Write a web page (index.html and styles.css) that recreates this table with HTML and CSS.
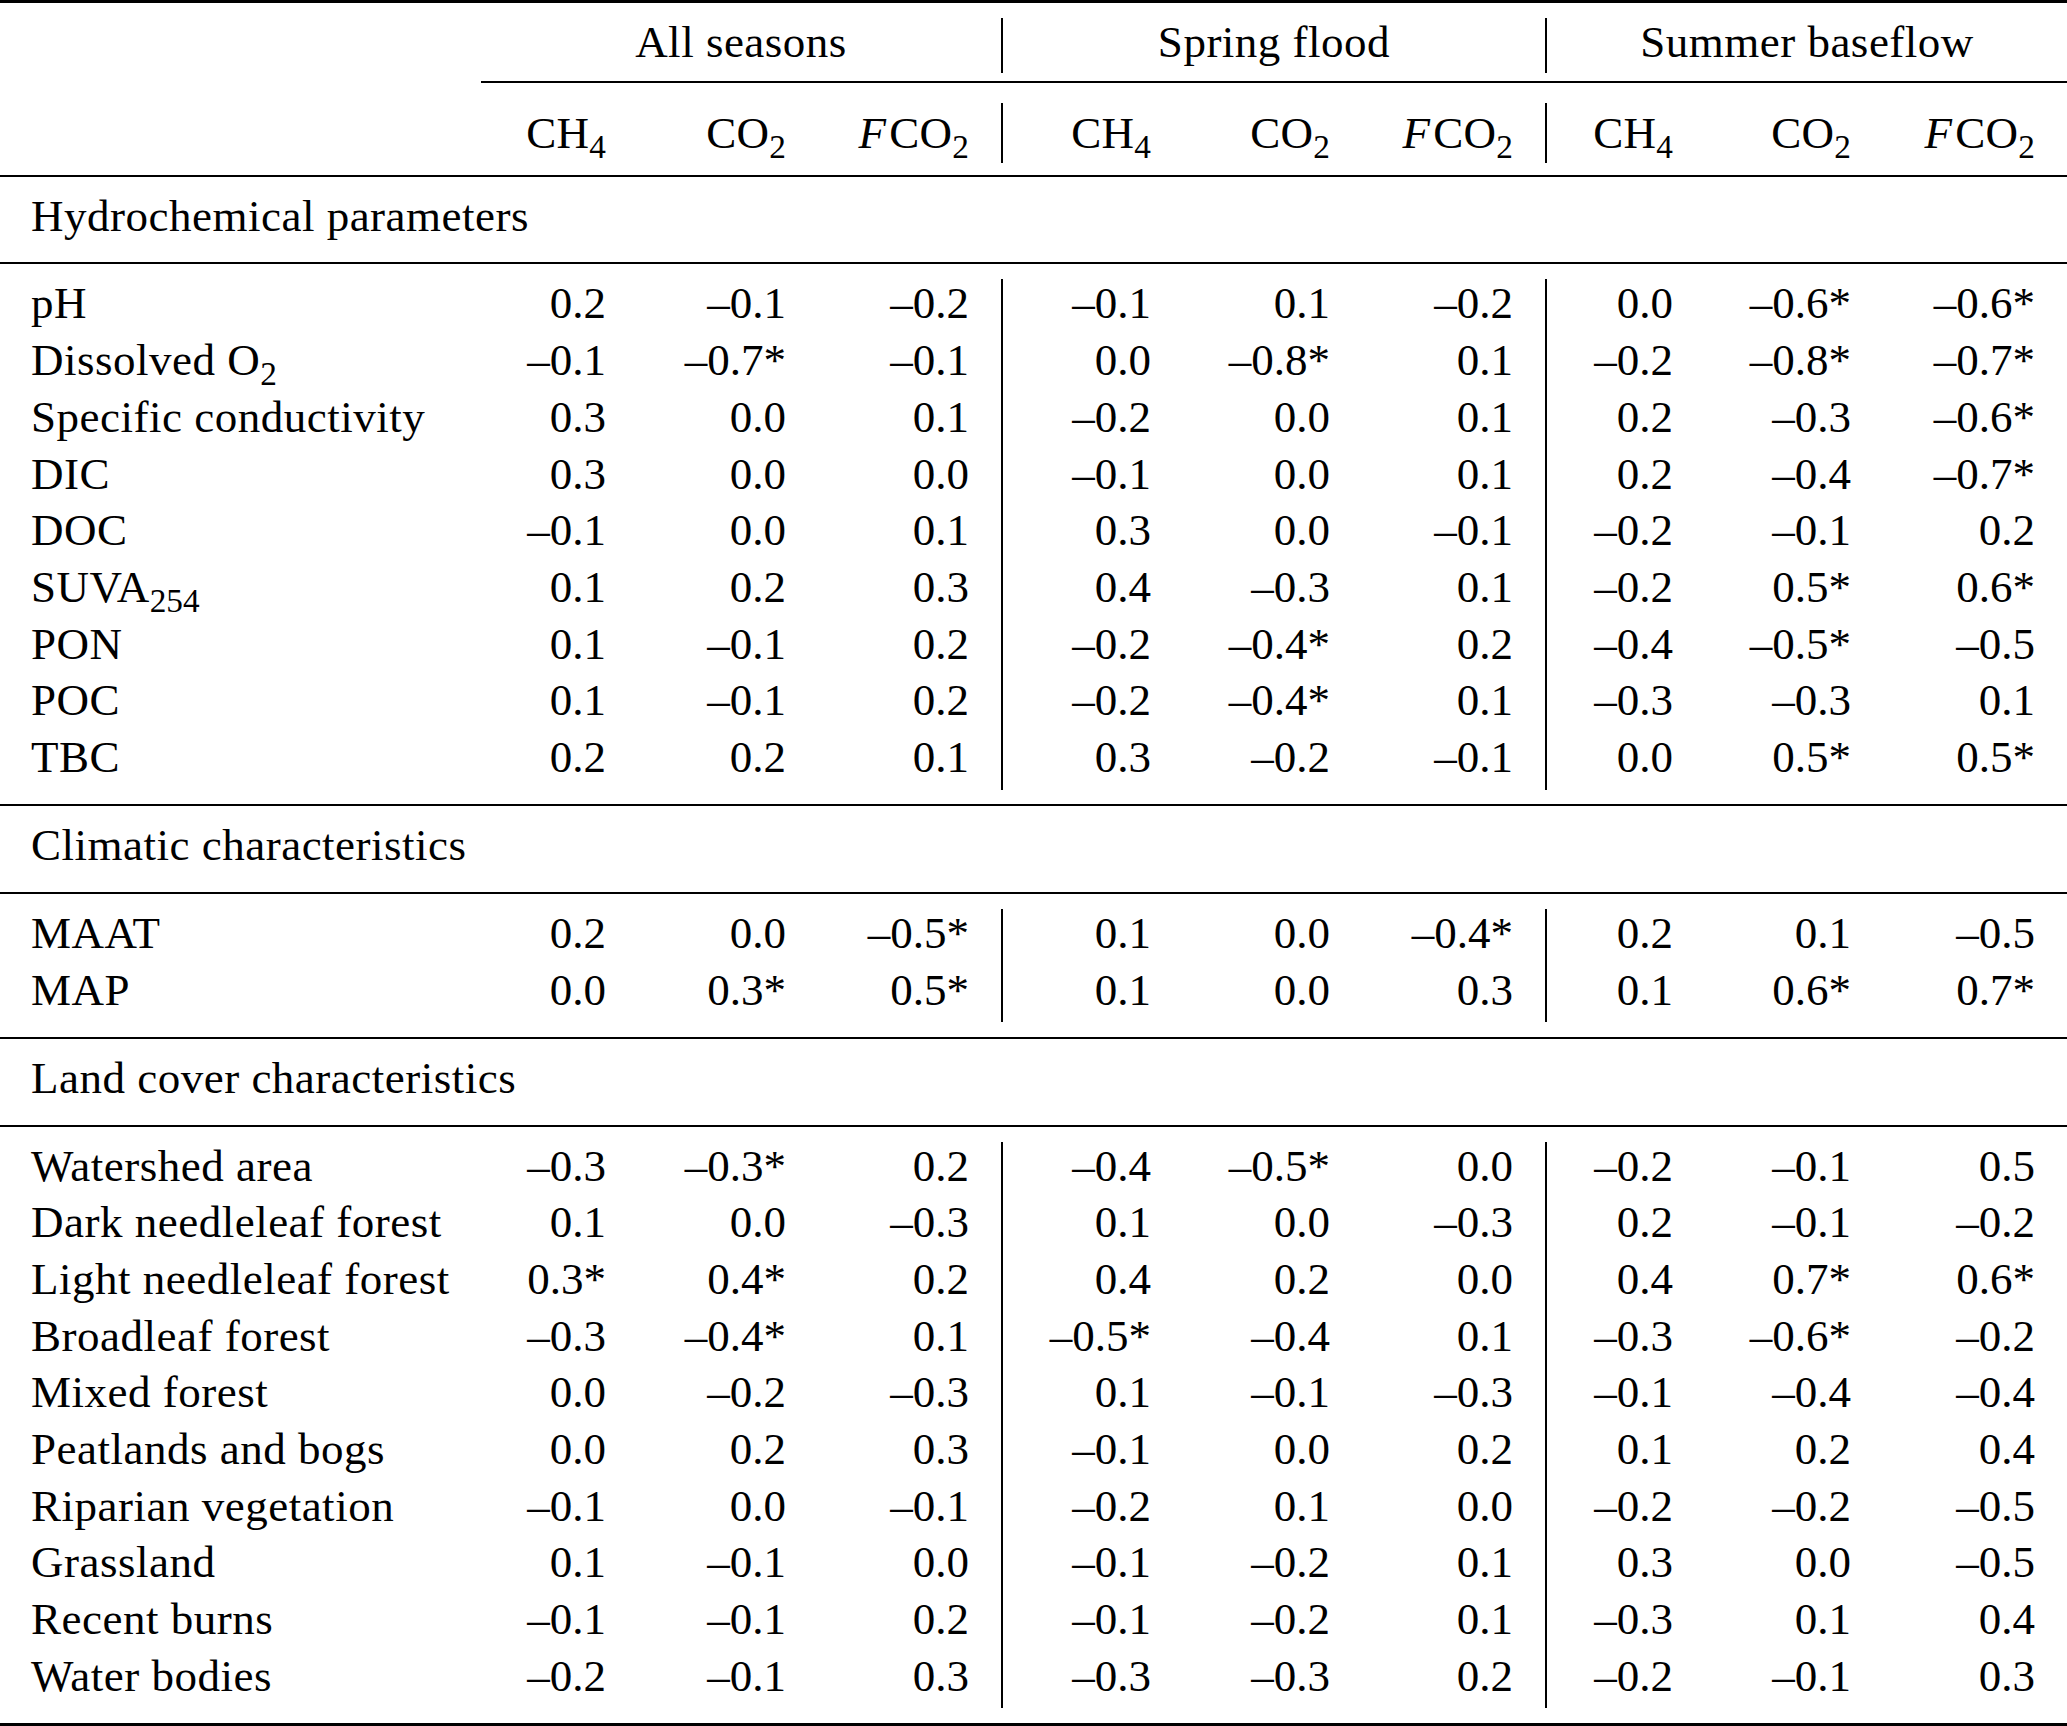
FILE: index.html
```html
<!DOCTYPE html>
<html lang="en">
<head>
<meta charset="utf-8">
<title>Correlation table</title>
<link rel="stylesheet" href="styles.css">
</head>
<body>
<div class="table">
  <div class="rule rule-heavy"></div>

  <div class="block block-head1">
    <div class="row row-group">
      <div class="cell label"></div>
      <div class="cell group sep">All seasons</div>
      <div class="cell group sep">Spring flood</div>
      <div class="cell group">Summer baseflow</div>
    </div>
  </div>
  <div class="rule rule-cmid"></div>

  <div class="block block-head2">
    <div class="row row-sub">
      <div class="cell label"></div>
      <div class="cell">CH<span class="sub">4</span></div>
      <div class="cell">CO<span class="sub">2</span></div>
      <div class="cell sep"><i>F</i>CO<span class="sub">2</span></div>
      <div class="cell">CH<span class="sub">4</span></div>
      <div class="cell">CO<span class="sub">2</span></div>
      <div class="cell sep"><i>F</i>CO<span class="sub">2</span></div>
      <div class="cell">CH<span class="sub">4</span></div>
      <div class="cell">CO<span class="sub">2</span></div>
      <div class="cell"><i>F</i>CO<span class="sub">2</span></div>
    </div>
  </div>
  <div class="rule"></div>

  <div class="block">
    <div class="row"><div class="cell label section">Hydrochemical parameters</div></div>
  </div>
  <div class="rule"></div>

  <div class="block">
    <div class="row"><div class="cell label">pH</div><div class="cell">0.2</div><div class="cell">–0.1</div><div class="cell sep">–0.2</div><div class="cell">–0.1</div><div class="cell">0.1</div><div class="cell sep">–0.2</div><div class="cell">0.0</div><div class="cell">–0.6*</div><div class="cell">–0.6*</div></div>
    <div class="row"><div class="cell label">Dissolved O<span class="sub">2</span></div><div class="cell">–0.1</div><div class="cell">–0.7*</div><div class="cell sep">–0.1</div><div class="cell">0.0</div><div class="cell">–0.8*</div><div class="cell sep">0.1</div><div class="cell">–0.2</div><div class="cell">–0.8*</div><div class="cell">–0.7*</div></div>
    <div class="row"><div class="cell label">Specific conductivity</div><div class="cell">0.3</div><div class="cell">0.0</div><div class="cell sep">0.1</div><div class="cell">–0.2</div><div class="cell">0.0</div><div class="cell sep">0.1</div><div class="cell">0.2</div><div class="cell">–0.3</div><div class="cell">–0.6*</div></div>
    <div class="row"><div class="cell label">DIC</div><div class="cell">0.3</div><div class="cell">0.0</div><div class="cell sep">0.0</div><div class="cell">–0.1</div><div class="cell">0.0</div><div class="cell sep">0.1</div><div class="cell">0.2</div><div class="cell">–0.4</div><div class="cell">–0.7*</div></div>
    <div class="row"><div class="cell label">DOC</div><div class="cell">–0.1</div><div class="cell">0.0</div><div class="cell sep">0.1</div><div class="cell">0.3</div><div class="cell">0.0</div><div class="cell sep">–0.1</div><div class="cell">–0.2</div><div class="cell">–0.1</div><div class="cell">0.2</div></div>
    <div class="row"><div class="cell label">SUVA<span class="sub">254</span></div><div class="cell">0.1</div><div class="cell">0.2</div><div class="cell sep">0.3</div><div class="cell">0.4</div><div class="cell">–0.3</div><div class="cell sep">0.1</div><div class="cell">–0.2</div><div class="cell">0.5*</div><div class="cell">0.6*</div></div>
    <div class="row"><div class="cell label">PON</div><div class="cell">0.1</div><div class="cell">–0.1</div><div class="cell sep">0.2</div><div class="cell">–0.2</div><div class="cell">–0.4*</div><div class="cell sep">0.2</div><div class="cell">–0.4</div><div class="cell">–0.5*</div><div class="cell">–0.5</div></div>
    <div class="row"><div class="cell label">POC</div><div class="cell">0.1</div><div class="cell">–0.1</div><div class="cell sep">0.2</div><div class="cell">–0.2</div><div class="cell">–0.4*</div><div class="cell sep">0.1</div><div class="cell">–0.3</div><div class="cell">–0.3</div><div class="cell">0.1</div></div>
    <div class="row"><div class="cell label">TBC</div><div class="cell">0.2</div><div class="cell">0.2</div><div class="cell sep">0.1</div><div class="cell">0.3</div><div class="cell">–0.2</div><div class="cell sep">–0.1</div><div class="cell">0.0</div><div class="cell">0.5*</div><div class="cell">0.5*</div></div>
  </div>
  <div class="rule"></div>

  <div class="block">
    <div class="row"><div class="cell label section">Climatic characteristics</div></div>
  </div>
  <div class="rule"></div>

  <div class="block">
    <div class="row"><div class="cell label">MAAT</div><div class="cell">0.2</div><div class="cell">0.0</div><div class="cell sep">–0.5*</div><div class="cell">0.1</div><div class="cell">0.0</div><div class="cell sep">–0.4*</div><div class="cell">0.2</div><div class="cell">0.1</div><div class="cell">–0.5</div></div>
    <div class="row"><div class="cell label">MAP</div><div class="cell">0.0</div><div class="cell">0.3*</div><div class="cell sep">0.5*</div><div class="cell">0.1</div><div class="cell">0.0</div><div class="cell sep">0.3</div><div class="cell">0.1</div><div class="cell">0.6*</div><div class="cell">0.7*</div></div>
  </div>
  <div class="rule"></div>

  <div class="block">
    <div class="row"><div class="cell label section">Land cover characteristics</div></div>
  </div>
  <div class="rule"></div>

  <div class="block">
    <div class="row"><div class="cell label">Watershed area</div><div class="cell">–0.3</div><div class="cell">–0.3*</div><div class="cell sep">0.2</div><div class="cell">–0.4</div><div class="cell">–0.5*</div><div class="cell sep">0.0</div><div class="cell">–0.2</div><div class="cell">–0.1</div><div class="cell">0.5</div></div>
    <div class="row"><div class="cell label">Dark needleleaf forest</div><div class="cell">0.1</div><div class="cell">0.0</div><div class="cell sep">–0.3</div><div class="cell">0.1</div><div class="cell">0.0</div><div class="cell sep">–0.3</div><div class="cell">0.2</div><div class="cell">–0.1</div><div class="cell">–0.2</div></div>
    <div class="row"><div class="cell label">Light needleleaf forest</div><div class="cell">0.3*</div><div class="cell">0.4*</div><div class="cell sep">0.2</div><div class="cell">0.4</div><div class="cell">0.2</div><div class="cell sep">0.0</div><div class="cell">0.4</div><div class="cell">0.7*</div><div class="cell">0.6*</div></div>
    <div class="row"><div class="cell label">Broadleaf forest</div><div class="cell">–0.3</div><div class="cell">–0.4*</div><div class="cell sep">0.1</div><div class="cell">–0.5*</div><div class="cell">–0.4</div><div class="cell sep">0.1</div><div class="cell">–0.3</div><div class="cell">–0.6*</div><div class="cell">–0.2</div></div>
    <div class="row"><div class="cell label">Mixed forest</div><div class="cell">0.0</div><div class="cell">–0.2</div><div class="cell sep">–0.3</div><div class="cell">0.1</div><div class="cell">–0.1</div><div class="cell sep">–0.3</div><div class="cell">–0.1</div><div class="cell">–0.4</div><div class="cell">–0.4</div></div>
    <div class="row"><div class="cell label">Peatlands and bogs</div><div class="cell">0.0</div><div class="cell">0.2</div><div class="cell sep">0.3</div><div class="cell">–0.1</div><div class="cell">0.0</div><div class="cell sep">0.2</div><div class="cell">0.1</div><div class="cell">0.2</div><div class="cell">0.4</div></div>
    <div class="row"><div class="cell label">Riparian vegetation</div><div class="cell">–0.1</div><div class="cell">0.0</div><div class="cell sep">–0.1</div><div class="cell">–0.2</div><div class="cell">0.1</div><div class="cell sep">0.0</div><div class="cell">–0.2</div><div class="cell">–0.2</div><div class="cell">–0.5</div></div>
    <div class="row"><div class="cell label">Grassland</div><div class="cell">0.1</div><div class="cell">–0.1</div><div class="cell sep">0.0</div><div class="cell">–0.1</div><div class="cell">–0.2</div><div class="cell sep">0.1</div><div class="cell">0.3</div><div class="cell">0.0</div><div class="cell">–0.5</div></div>
    <div class="row"><div class="cell label">Recent burns</div><div class="cell">–0.1</div><div class="cell">–0.1</div><div class="cell sep">0.2</div><div class="cell">–0.1</div><div class="cell">–0.2</div><div class="cell sep">0.1</div><div class="cell">–0.3</div><div class="cell">0.1</div><div class="cell">0.4</div></div>
    <div class="row"><div class="cell label">Water bodies</div><div class="cell">–0.2</div><div class="cell">–0.1</div><div class="cell sep">0.3</div><div class="cell">–0.3</div><div class="cell">–0.3</div><div class="cell sep">0.2</div><div class="cell">–0.2</div><div class="cell">–0.1</div><div class="cell">0.3</div></div>
  </div>

  <div class="rule rule-heavy"></div>
</div>
</body>
</html>
```

FILE: styles.css
```css
html, body {
  margin: 0;
  padding: 0;
  background: #ffffff;
}

body {
  color: #000000;
  font-family: "Liberation Serif", "Times New Roman", serif;
  font-size: 45px;
}

.table {
  width: 2067px;
}

.rule {
  height: 2px;
  background: #000000;
}

.rule-heavy {
  height: 3px;
}

.rule-cmid {
  margin-left: 481px;
  height: 2px;
}

.block {
  padding: 15px 0 14.3px;
}

.block-head1 {
  padding: 15px 0 7.5px;
}

.block-head2 {
  padding: 20.5px 0 14.5px;
}

.row {
  display: grid;
  grid-template-columns: 481px 157px 180px 185px 180px 179px 185px 158px 178px 184px;
  height: 56.7px;
}

.cell {
  box-sizing: border-box;
  line-height: 49px;
  padding: 0 32px 7.7px 0;
  text-align: right;
  white-space: nowrap;
}

.cell.label {
  text-align: left;
  padding-left: 31px;
  padding-right: 0;
  letter-spacing: 0.5px;
}

.cell.section {
  grid-column: 1 / -1;
}

.cell.sep {
  border-right: 2px solid #000000;
}

.row-group {
  height: 55px;
}

.row-group .cell {
  line-height: 49px;
  padding-bottom: 6px;
}

.row-group .group {
  grid-column: span 3;
  text-align: center;
  padding-right: 0;
  letter-spacing: 0.5px;
}

.row-sub {
  height: 57px;
}

.row-sub .cell {
  line-height: 56px;
  padding-top: 1.5px;
  padding-bottom: 0;
  letter-spacing: 0.3px;
}

.sub {
  font-size: 0.74em;
  vertical-align: -10px;
  line-height: 1;
  letter-spacing: 0;
}

i {
  font-style: italic;
  margin-right: 3px;
}
```
